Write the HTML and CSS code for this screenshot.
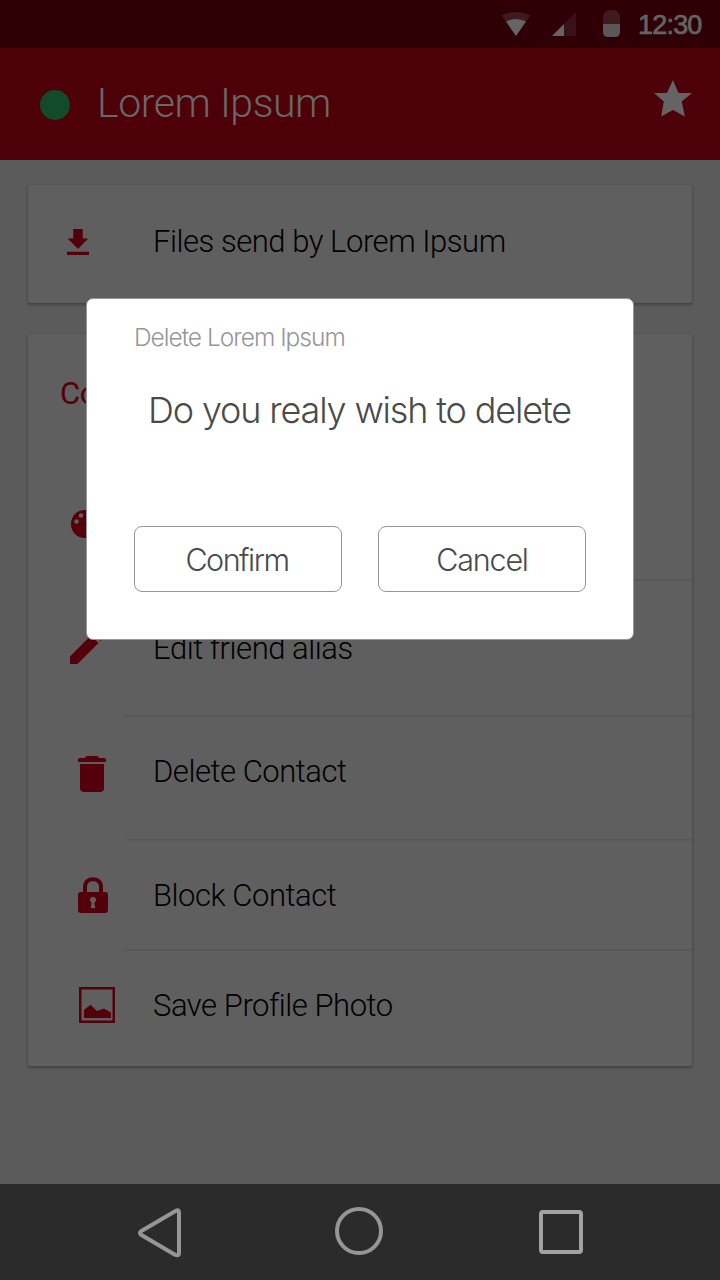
FILE: index.html
```html
<!DOCTYPE html>
<html lang="en">
<head>
<meta charset="utf-8">
<title>Lorem Ipsum</title>
<link rel="stylesheet" href="styles.css">
</head>
<body>
<div class="screen">
  <div class="status">
    <svg class="status-icons" width="150" height="48" viewBox="490 0 150 48">
      <path fill="#3f1b20" d="M501.700 15.500Q516 8.500 530.300 15.500L516 36Z"/>
      <path fill="#646464" d="M506 21.500Q516 16.500 526 21.500L516 36Z"/>
      <path fill="#391219" d="M576 12V36H552Z"/>
      <path fill="#646464" d="M564 24V36H552Z"/>
      <path fill="#3f1b20" d="M603 24V17.500Q603 10 611.500 10T620 17.500V24Z"/>
      <path fill="#5b5757" d="M603 24H620V32Q620 37 615 37H608Q603 37 603 32Z"/>
    </svg>
    <span class="clock">12:30</span>
  </div>
  <header class="appbar">
    <span class="presence"></span>
    <h1 class="name">Lorem Ipsum</h1>
    <svg class="star" width="38" height="37" viewBox="0 0 38 37"><path fill="#646464" d="M19 0L24.500 13H38L27.800 21.500L30.800 36.500L19 30L7.200 36.500L9.800 21.500L0 13H12.900Z"/></svg>
  </header>
  <main class="content">
    <section class="card files">
      <div class="icon"><svg class="download" width="22" height="26" viewBox="0 0 22 26"><path fill="#53000b" d="M6.300 0H15.700V9.500H21.300L11 20L.7 9.500H6.300ZM0 22.700H22V26H0Z"/></svg></div>
      <span class="label">Files send by Lorem Ipsum</span>
    </section>
    <section class="card contact">
      <div class="intro">
        <h2 class="heading">Co</h2>
        <svg class="palette" width="30" height="28" viewBox="0 0 30 28"><path fill="#53000b" fill-rule="evenodd" d="M14 0C6 0 0 6 0 14S6 28 14 28C18 28 16 21 20 20C27 21 30 16 28 10C26 3 20 0 14 0ZM5.500 9.200A2.300 2.300 0 1 0 5.500 13.800A2.300 2.300 0 1 0 5.500 9.200ZM10 3.200A2.300 2.300 0 1 0 10 7.800A2.300 2.300 0 1 0 10 3.200Z"/></svg>
      </div>
      <div class="row edit">
        <div class="icon"><svg class="pencil" width="38" height="38" viewBox="0 0 38 38"><path fill="#53000b" d="M0 38V30.500L21 9.500L28.500 17L7.500 38ZM23 7.500L30 .5L37.500 8L30.500 15Z"/></svg></div>
        <div class="cell"><span class="label">Edit friend alias</span></div>
      </div>
      <div class="row delete">
        <div class="icon"><svg class="trash" width="28" height="36" viewBox="0 0 28 36"><path fill="#53000b" d="M0 6V4Q0 2 2 2H7Q7.500 0 9.500 0H18.500Q20.500 0 21 2H26Q28 2 28 4V6ZM2 8H26V32Q26 36 22 36H6Q2 36 2 32Z"/></svg></div>
        <div class="cell"><span class="label">Delete Contact</span></div>
      </div>
      <div class="row block">
        <div class="icon"><svg class="lock" width="30" height="36" viewBox="0 0 30 36"><path fill="none" stroke="#53000b" stroke-width="4" d="M7 17V10C7 -.5 23 -.5 23 10V17"/><path fill="#53000b" fill-rule="evenodd" d="M3 15H27Q30 15 30 18V33Q30 36 27 36H3Q0 36 0 33V18Q0 15 3 15ZM15 20C11.500 20 11 24 13.500 25.500V27L12.700 31H17.300L16.500 27V25.500C19 24 18.500 20 15 20Z"/></svg></div>
        <div class="cell"><span class="label">Block Contact</span></div>
      </div>
      <div class="row photo">
        <div class="icon"><svg class="picture" width="36" height="36" viewBox="0 0 36 36"><path fill="none" stroke="#53000b" stroke-width="2.500" d="M1.250 1.250H34.750V34.750H1.250Z"/><path fill="#53000b" d="M5 31V23L11.500 17.700L18 24L25 21.500L32 25.500V31Z"/></svg></div>
        <div class="cell"><span class="label">Save Profile Photo</span></div>
      </div>
    </section>
  </main>
  <nav class="navbar">
    <svg width="720" height="96" viewBox="0 0 720 96" fill="none" stroke="#969696" stroke-width="4">
      <path stroke-linejoin="round" d="M141 47.300Q139 49 141 50.700L175 70.700Q179 72.500 179 69V28.500Q179 25 175.500 27Z"/>
      <circle cx="359" cy="47" r="22"/>
      <rect stroke="#a2a2a2" x="541" y="28" width="40" height="40" rx="2"/>
    </svg>
  </nav>
  <div class="dialog" role="dialog">
    <h3 class="dialog-title">Delete Lorem Ipsum</h3>
    <p class="question">Do you realy wish to delete</p>
    <div class="actions">
      <button class="btn confirm"><span>Confirm</span></button>
      <button class="btn cancel"><span>Cancel</span></button>
    </div>
  </div>
</div>
</body>
</html>
```

FILE: styles.css
```css
* { box-sizing: border-box; }
body { margin: 0; background: #5b5b5b; }
h1, h2, h3, p { margin: 0; }
svg { display: block; flex: none; }
.screen {
  position: relative;
  display: flex;
  flex-direction: column;
  width: 720px;
  height: 1280px;
  overflow: hidden;
  background: #5b5b5b;
  font-family: Roboto, sans-serif;
  font-weight: 300;
}
.status {
  display: flex;
  justify-content: flex-end;
  align-items: center;
  height: 48px;
  padding-right: 19px;
  background: #2e0006;
}
.clock {
  width: 63px;
  padding-top: 2px;
  font: 400 27px/46px "Liberation Sans", sans-serif;
  letter-spacing: -.8px;
  color: #646464;
  -webkit-text-stroke: .7px #646464;
  white-space: nowrap;
}
.status-icons { margin-right: -2px; }
.appbar {
  display: flex;
  align-items: center;
  height: 112px;
  padding: 0 28px 0 40px;
  background: #4e0009;
}
.presence {
  width: 30px;
  height: 30px;
  margin-top: 2px;
  border-radius: 50%;
  background: #114b29;
}
.name {
  flex: 1;
  margin: -2px 0 0 27px;
  font-size: 41px;
  font-weight: 300;
  line-height: 48px;
  letter-spacing: -.45px;
  color: #686868;
}
.star { margin-top: -11px; }
.content {
  display: flex;
  flex-direction: column;
  gap: 31px;
  height: 1024px;
  padding: 25px 28px 0;
}
.card {
  background: #5f5f5f;
  border-radius: 2px;
  box-shadow: 0 2px 3px rgba(0, 0, 0, .25), 0 0 3px rgba(0, 0, 0, .12);
}
.files { display: flex; align-items: center; height: 118px; padding-bottom: 4px; }
.files .icon { width: 125px; padding: 0 0 0 39px; }
.contact { height: 732px; }
.intro { height: 246px; padding: 42px 0 0 32px; }
.heading { font-size: 31px; font-weight: 400; line-height: 36px; letter-spacing: -.4px; color: #53000b; }
.palette { margin: 98px 0 0 11px; }
.row { display: flex; }
.row .icon { width: 97px; flex: none; padding-left: 50px; }
.cell {
  flex: 1;
  display: flex;
  align-items: center;
  padding-left: 28px;
  border-top: 1px solid #5a5a5a;
  box-shadow: 0 -1px 0 #555;
}
.label { font-size: 31px; line-height: 36px; letter-spacing: -.46px; color: #000; white-space: nowrap; }
.edit { height: 136px; }
.edit .icon { padding: 46px 0 0 42px; }
.delete { height: 124px; }
.delete .icon { padding-top: 40px; }
.delete .cell { padding-bottom: 14px; }
.block { height: 110px; }
.block .icon { padding-top: 37px; }
.photo { height: 116px; }
.photo .icon { padding: 37px 0 0 51px; }
.photo .cell { padding-bottom: 5px; }
.navbar { height: 96px; background: #2b2b2b; }
.dialog {
  position: absolute;
  left: 86px;
  top: 298px;
  width: 548px;
  height: 342px;
  padding: 21px 47px 0;
  border: 1px solid #979797;
  border-radius: 7px;
  background: #fff;
  font-family: Inter, "Liberation Sans", sans-serif;
  font-weight: 300;
}
.dialog-title {
  font-size: 24.500px;
  font-weight: 300;
  line-height: 34px;
  letter-spacing: -1px;
  color: #979797;
}
.question {
  padding: 31px 0 0 14px;
  font-size: 36px;
  line-height: 50px;
  letter-spacing: -1.150px;
  color: #4a4a4a;
  white-space: nowrap;
}
.actions { display: flex; gap: 36px; margin-top: 91px; }
.btn {
  width: 208px;
  height: 66px;
  padding: 2px 0 0;
  border: 1px solid #979797;
  border-radius: 8px;
  background: #fff;
  font: inherit;
  font-size: 30.500px;
  line-height: 40px;
  letter-spacing: -1.500px;
  color: #4a4a4a;
}
.confirm { padding-right: 2px; }
.cancel { letter-spacing: -1.200px; }
```
